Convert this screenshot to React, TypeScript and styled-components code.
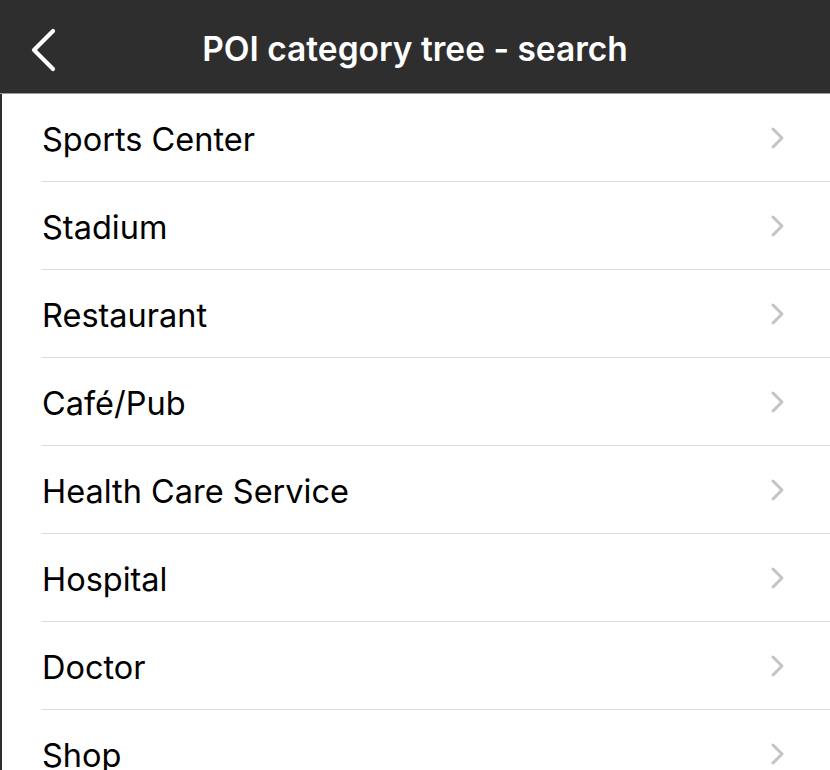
import React from "react";
import styled, { createGlobalStyle } from "styled-components";

const Global = createGlobalStyle`
  html, body { margin: 0; padding: 0; background: #ffffff; }
  body { font-family: Inter, "Liberation Sans", sans-serif; overflow: hidden; }
`;

const Screen = styled.div`
  width: 830px;
  height: 770px;
  display: flex;
  flex-direction: column;
  overflow: hidden;
  background: #ffffff;
`;

const Header = styled.header`
  height: 93px;
  flex: none;
  background: #2e2e2e;
  border-bottom: 1px solid #9a9a9a;
  display: flex;
  align-items: center;
  justify-content: center;
  position: relative;
`;

const BackButton = styled.button`
  position: absolute;
  left: 20px;
  top: 26px;
  width: 40px;
  height: 48px;
  padding: 0;
  border: none;
  background: transparent;
  display: flex;
  align-items: center;
  justify-content: center;
`;

const Title = styled.h1`
  margin: 0;
  color: #ffffff;
  font-size: 33.5px;
  font-weight: 600;
  letter-spacing: 0;
  margin-top: 4px;
`;

const List = styled.ul`
  margin: 0;
  padding: 0;
  list-style: none;
  flex: 1;
  border-left: 2px solid #2e2e2e;
`;

const Row = styled.li`
  height: 88px;
  box-sizing: border-box;
  margin-left: 40px;
  padding-right: 44px;
  padding-top: 3px;
  border-bottom: 1px solid #dcdcdc;
  display: flex;
  align-items: center;
  justify-content: space-between;
`;

const Label = styled.span`
  font-size: 32.5px;
  color: #000000;
  letter-spacing: 0;
`;

const ChevronBox = styled.span`
  display: flex;
  margin-top: -3px;
`;

const items = [
  "Sports Center",
  "Stadium",
  "Restaurant",
  "Café/Pub",
  "Health Care Service",
  "Hospital",
  "Doctor",
  "Shop",
];

const Chevron = () => (
  <ChevronBox>
    <svg width="16" height="24" viewBox="0 0 16 24">
      <path d="M3 3 L12 12 L3 21" fill="none" stroke="#c4c4c7" strokeWidth="3" strokeLinecap="round" strokeLinejoin="round" />
    </svg>
  </ChevronBox>
);

export default function App() {
  return (
    <Screen>
      <Global />
      <Header>
        <BackButton aria-label="Back">
          <svg width="32" height="44" viewBox="0 0 32 44">
            <path d="M29 3 L10 22 L29 41" fill="none" stroke="#ffffff" strokeWidth="4.2" strokeLinecap="round" strokeLinejoin="round" />
          </svg>
        </BackButton>
        <Title>POI category tree - search</Title>
      </Header>
      <List>
        {items.map((t) => (
          <Row key={t}>
            <Label>{t}</Label>
            <Chevron />
          </Row>
        ))}
      </List>
    </Screen>
  );
}
